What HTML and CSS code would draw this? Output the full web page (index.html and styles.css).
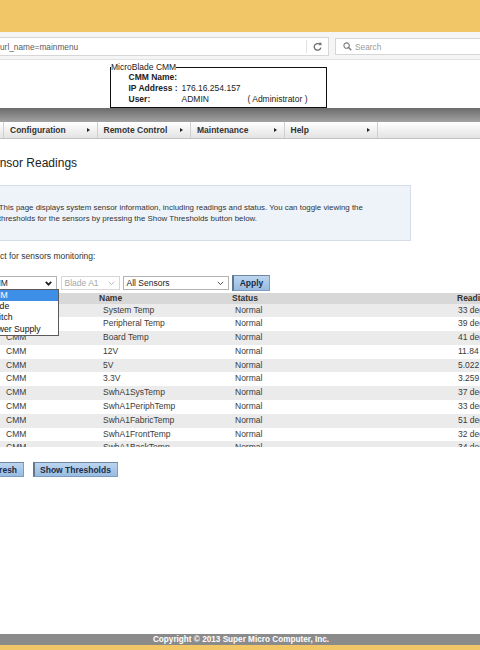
FILE: index.html
```html
<!DOCTYPE html>
<html>
<head>
<meta charset="utf-8">
<title>Sensor Readings</title>
<link rel="stylesheet" href="styles.css">
</head>
<body>
<div class="frame">
  <div class="chrome-top"></div>
  <div class="toolbar">
    <div class="urlbar">
      <span class="url-text">url_name=mainmenu</span>
      <span class="url-divider"></span>
      <span class="reload">
        <svg width="9" height="9" viewBox="0 0 10 10"><path d="M8.2 3.4A3.7 3.7 0 1 0 8.7 6.2" fill="none" stroke="#6a6a6a" stroke-width="1.4"/><path d="M6.1 0.8 L9.4 0.8 L9.4 4.1 Z" fill="#6a6a6a"/></svg>
      </span>
    </div>
    <div class="searchbar">
      <svg class="mag" width="9" height="9" viewBox="0 0 10 10"><circle cx="4" cy="4" r="3" fill="none" stroke="#7a7a7a" stroke-width="1.2"/><path d="M6.2 6.2 L9.2 9.2" stroke="#7a7a7a" stroke-width="1.5"/></svg>
      <span class="search-ph">Search</span>
    </div>
  </div>

  <div class="page-head">
    <fieldset class="cmm-box">
      <legend>MicroBlade CMM</legend>
      <div class="cmm-grid">
        <span class="lbl">CMM Name:</span><span></span><span></span>
        <span class="lbl">IP Address :</span><span>176.16.254.157</span><span></span>
        <span class="lbl">User:</span><span>ADMIN</span><span>( Administrator )</span>
      </div>
    </fieldset>
  </div>
  <div class="shade-band"></div>
  <nav class="menubar">
    <span class="menu-lead"></span>
    <div class="menu-item"><span>Configuration</span><span class="tri"></span></div>
    <div class="menu-item"><span>Remote Control</span><span class="tri"></span></div>
    <div class="menu-item"><span>Maintenance</span><span class="tri"></span></div>
    <div class="menu-item"><span>Help</span><span class="tri"></span></div>
  </nav>

  <main class="content">
    <h1 class="title">Sensor Readings</h1>
    <div class="info">This page displays system sensor information, including readings and status. You can toggle viewing the<br>thresholds for the sensors by pressing the Show Thresholds button below.</div>
    <div class="sel-label">Select for sensors monitoring:</div>
    <div class="controls">
      <div class="select sel-type">
        <span class="sel-text">CMM</span>
        <svg class="chev" width="7" height="5" viewBox="0 0 7 5"><path d="M0.8 0.8 L3.5 3.6 L6.2 0.8" fill="none" stroke="#222" stroke-width="1.8"/></svg>
        <ul class="options">
          <li class="active">CMM</li>
          <li>Blade</li>
          <li>Switch</li>
          <li>Power Supply</li>
        </ul>
      </div>
      <div class="select sel-blade disabled">
        <span class="sel-text">Blade A1</span>
        <svg class="chev" width="7" height="5" viewBox="0 0 7 5"><path d="M0.8 0.8 L3.5 3.6 L6.2 0.8" fill="none" stroke="#bbb" stroke-width="1"/></svg>
      </div>
      <div class="select sel-sensor">
        <span class="sel-text">All Sensors</span>
        <svg class="chev" width="7" height="5" viewBox="0 0 7 5"><path d="M0.8 0.8 L3.5 3.6 L6.2 0.8" fill="none" stroke="#555" stroke-width="1"/></svg>
      </div>
      <button class="btn btn-apply">Apply</button>
    </div>

    <div class="table-wrap">
      <table class="sensors">
        <thead>
          <tr><th class="c1">Location</th><th class="c2">Name</th><th class="c3">Status</th><th class="c4">Reading</th></tr>
        </thead>
        <tbody>
          <tr><td class="c1">CMM</td><td class="c2">System Temp</td><td class="c3">Normal</td><td class="c4">33 degrees C</td></tr>
          <tr><td class="c1">CMM</td><td class="c2">Peripheral Temp</td><td class="c3">Normal</td><td class="c4">39 degrees C</td></tr>
          <tr><td class="c1">CMM</td><td class="c2">Board Temp</td><td class="c3">Normal</td><td class="c4">41 degrees C</td></tr>
          <tr><td class="c1">CMM</td><td class="c2">12V</td><td class="c3">Normal</td><td class="c4">11.84 Volts</td></tr>
          <tr><td class="c1">CMM</td><td class="c2">5V</td><td class="c3">Normal</td><td class="c4">5.022 Volts</td></tr>
          <tr><td class="c1">CMM</td><td class="c2">3.3V</td><td class="c3">Normal</td><td class="c4">3.259 Volts</td></tr>
          <tr><td class="c1">CMM</td><td class="c2">SwhA1SysTemp</td><td class="c3">Normal</td><td class="c4">37 degrees C</td></tr>
          <tr><td class="c1">CMM</td><td class="c2">SwhA1PeriphTemp</td><td class="c3">Normal</td><td class="c4">33 degrees C</td></tr>
          <tr><td class="c1">CMM</td><td class="c2">SwhA1FabricTemp</td><td class="c3">Normal</td><td class="c4">51 degrees C</td></tr>
          <tr><td class="c1">CMM</td><td class="c2">SwhA1FrontTemp</td><td class="c3">Normal</td><td class="c4">32 degrees C</td></tr>
          <tr><td class="c1">CMM</td><td class="c2">SwhA1BackTemp</td><td class="c3">Normal</td><td class="c4">34 degrees C</td></tr>
          <tr><td class="c1">CMM</td><td class="c2">SwhA1CpuTemp</td><td class="c3">Normal</td><td class="c4">40 degrees C</td></tr>
        </tbody>
      </table>
    </div>

    <div class="actions">
      <button class="btn">Refresh</button>
      <button class="btn">Show Thresholds</button>
    </div>
  </main>

  <footer class="footer">
    <div class="footer-bar">Copyright © 2013 Super Micro Computer, Inc.</div>
    <div class="footer-edge"></div>
  </footer>
</div>
</body>
</html>
```
FILE: styles.css
```css
* { box-sizing: border-box; }
html, body { margin: 0; padding: 0; }
body {
  width: 480px;
  height: 650px;
  overflow: hidden;
  background: #fff;
  color: #333;
  font-family: "Liberation Sans", Arial, sans-serif;
}
.frame {
  width: 480px;
  height: 650px;
  display: flex;
  flex-direction: column;
  overflow: hidden;
}

/* browser chrome */
.chrome-top { flex: none; height: 32px; background: #f0c667; }
.toolbar {
  flex: none;
  height: 28px;
  background: #f5f5f5;
  border-bottom: 1px solid #e2e2e2;
  display: flex;
  align-items: flex-start;
  padding-top: 5px;
}
.urlbar {
  flex: none;
  margin-left: -12px;
  width: 341px;
  height: 19px;
  background: #fff;
  border: 1px solid #d6d6d6;
  display: flex;
  align-items: center;
  padding-left: 11px;
}
.url-text { flex: 1; font-size: 8.3px; color: #5a5a5a; }
.url-divider { width: 1px; height: 13px; background: #e2e2e2; }
.reload { width: 21px; display: flex; justify-content: center; align-items: center; }
.searchbar {
  flex: none;
  margin-left: 6px;
  margin-top: 1px;
  width: 160px;
  height: 17px;
  background: #fff;
  border: 1px solid #d6d6d6;
  display: flex;
  align-items: center;
  padding-left: 7px;
  gap: 3px;
}
.search-ph { font-size: 8.3px; color: #9a9a9a; }

/* page header */
.page-head { flex: none; height: 48px; background: #fff; }
.cmm-box {
  margin: 2px 0 0 110px;
  width: 217px;
  height: 46px;
  padding: 0;
  border: 1.5px solid #111;
}
.cmm-box legend {
  padding: 0;
  font-size: 8.5px;
  line-height: 10px;
  color: #222;
}
.cmm-grid {
  display: grid;
  grid-template-columns: 53px 66px auto;
  padding-left: 17.5px;
  font-size: 8.5px;
  line-height: 11px;
  color: #222;
}
.lbl { font-weight: bold; }

.shade-band { flex: none; height: 14px; background: linear-gradient(#6b6b6b, #a2a2a2); }
.menubar {
  flex: none;
  height: 17px;
  display: flex;
  background: linear-gradient(#ffffff, #e3e3e3);
  border-bottom: 1px solid #c2c2c2;
}
.menu-lead { width: 4px; border-right: 1px solid #cfcfcf; }
.menu-item {
  width: 93.5px;
  border-right: 1px solid #cfcfcf;
  display: flex;
  align-items: center;
  justify-content: space-between;
  padding: 0 7px 0 6px;
  font-size: 8.5px;
  font-weight: bold;
  color: #333;
}
.tri {
  width: 0;
  height: 0;
  border-left: 3px solid #222;
  border-top: 2.5px solid transparent;
  border-bottom: 2.5px solid transparent;
}

/* content */
.content {
  flex: 1;
  margin-left: -16px;
  width: 620px;
  padding-top: 17px;
}
.title {
  margin: 0 0 0 1px;
  font-size: 12px;
  line-height: 14px;
  font-weight: normal;
  color: #222;
}
.info {
  margin-top: 15px;
  width: 427px;
  height: 56px;
  background: #eef3fa;
  border: 1px solid #d6dde8;
  padding: 15.5px 10px 0 13.8px;
  font-size: 7.9px;
  line-height: 11px;
  color: #333;
}
.sel-label {
  margin: 9px 0 0 -1px;
  font-size: 8.5px;
  line-height: 12px;
  color: #333;
}
.controls {
  margin-top: 13px;
  height: 16px;
  display: flex;
  align-items: center;
}
.select {
  position: relative;
  height: 13.5px;
  border: 1px solid #b3b3b3;
  background: #fff;
  display: flex;
  align-items: center;
  justify-content: space-between;
  padding: 0 4px 0 2.5px;
  font-size: 8.5px;
  color: #222;
}
.sel-type { width: 73px; margin-right: 4px; }
.sel-blade { width: 59px; margin-right: 3px; border-color: #d6d6d6; }
.sel-sensor { width: 106px; margin-right: 3px; }
.disabled .sel-text { color: #a8a8a8; }
.options {
  position: absolute;
  top: 100%;
  left: -1px;
  width: 75px;
  margin: 0;
  padding: 0;
  list-style: none;
  background: #fff;
  border: 1px solid #5a5a5a;
  z-index: 5;
}
.options li {
  height: 11.3px;
  line-height: 11.3px;
  padding-left: 2px;
  font-size: 8.7px;
  color: #111;
}
.options li.active { background: #3d8ee6; color: #fff; }

.btn {
  font-family: "Liberation Sans", Arial, sans-serif;
  font-size: 8.5px;
  font-weight: bold;
  color: #1d2c45;
  height: 15px;
  padding: 0 6px 0 5px;
  background: linear-gradient(#bcd5ef, #98bbe0);
  border: 1px solid #7d9cc2;
  border-left: 2px solid #5f7590;
  border-top: 1px solid #6f87a4;
  line-height: 12px;
  cursor: pointer;
}
.btn-apply { width: 38px; height: 16px; padding: 0; }

.table-wrap {
  margin-top: 1.5px;
  height: 154px;
  overflow: hidden;
}
.sensors {
  border-collapse: collapse;
  table-layout: fixed;
  width: 620px;
  font-size: 8.5px;
  color: #3a3a3a;
}
.sensors th {
  height: 11px;
  padding: 0 0 0 4px;
  line-height: 11px;
  text-align: left;
  font-weight: bold;
  color: #333;
  background: #d8d8d8;
}
.sensors td {
  height: 13.8px;
  padding: 0;
  line-height: 13.8px;
  white-space: nowrap;
  overflow: hidden;
}
.sensors tbody tr:nth-child(odd) td { background: #ebebeb; }
.sensors tbody tr:nth-child(even) td { background: #fff; }
.sensors .c1 { width: 111px; }
.sensors .c2 { width: 133px; }
.sensors .c3 { width: 225px; }
.sensors td.c1 { padding-left: 22px; }
.sensors td.c2 { padding-left: 8px; }
.sensors td.c3 { padding-left: 7px; }
.sensors td.c4 { padding-left: 5px; }

.actions {
  margin: 15.5px 0 0 -5.6px;
  display: flex;
  gap: 9px;
}

/* footer */
.footer { flex: none; margin-top: auto; }
.footer-bar {
  height: 11px;
  background: #8b8b8b;
  color: #fff;
  font-size: 8.2px;
  font-weight: bold;
  line-height: 11px;
  text-align: center;
  padding-left: 2px;
}
.footer-edge { height: 5px; background: #f0c667; }
```
